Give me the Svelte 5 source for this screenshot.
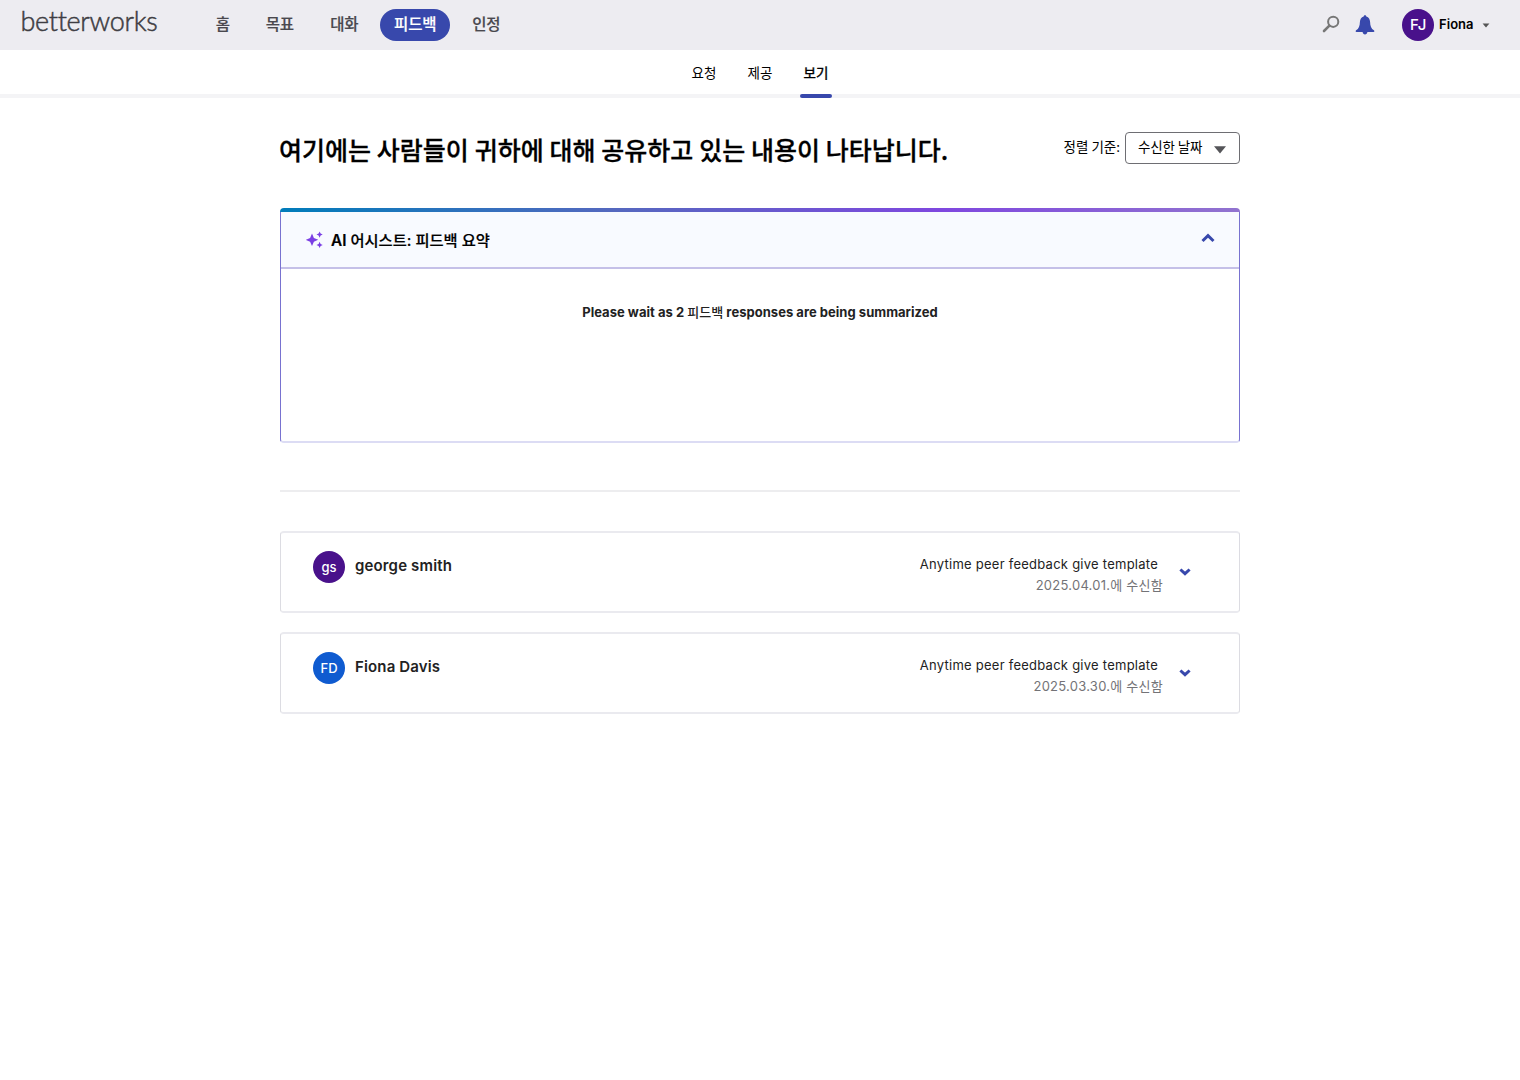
<script>
  const nav = [
    { label: '홈', size: 'one' },
    { label: '목표', size: 'two' },
    { label: '대화', size: 'two' },
    { label: '피드백', size: 'three', active: true },
    { label: '인정', size: 'two' }
  ];
  const tabs = ['요청', '제공', '보기'];
  let tab = $state('보기');
  const feedback = [
    { initials: 'gs', name: 'george smith', date: '2025.04.01.', tone: 'purple' },
    { initials: 'FD', name: 'Fiona Davis', date: '2025.03.30.', tone: 'blue' }
  ];
</script>

<header>
  <div class="logo">betterworks</div>
  <nav>
    {#each nav as item}
      <span class="item {item.size}" class:active={item.active}>{item.label}</span>
    {/each}
  </nav>
  <div class="tools">
    <svg class="search" width="18" height="18" viewBox="0 0 18 18">
      <circle cx="11.2" cy="6.8" r="5.1" fill="none" stroke="#777" stroke-width="2" />
      <path d="M7.4 10.6 2 16" stroke="#777" stroke-width="2.6" stroke-linecap="round" />
    </svg>
    <svg class="bell" width="20" height="20" viewBox="0 0 20 20">
      <path fill="#3848ac" d="M10 .2c.8 0 1.2.5 1.3 1.2 2.5.7 3.700 2.800 3.800 5.600.1 4.300 1.100 6.600 3.800 8.300.3.300.5.600.5.900 0 .5-.4.700-.9.700h-6.100c-.2 1.600-1.100 2.500-2.400 2.500s-2.200-.9-2.400-2.500H1.500c-.5 0-.9-.2-.9-.7 0-.3.2-.6.5-.9C3.800 13.600 4.800 11.300 4.900 7c.1-2.800 1.300-4.900 3.800-5.600C8.800.7 9.200.2 10 .2z" />
    </svg>
    <span class="avatar purple me">FJ</span>
    <span class="user">Fiona</span>
    <svg width="8" height="5" viewBox="0 0 8 5"><path d="M.6.4h6.800L4 4.400z" fill="#555" /></svg>
  </div>
</header>

<div class="tabs">
  {#each tabs as t}
    <button class:on={t === tab} onclick={() => (tab = t)}>{t}</button>
  {/each}
</div>

<main>
  <div class="heading">
    <h1>여기에는 사람들이 귀하에 대해 공유하고 있는 내용이 나타납니다.</h1>
    <div class="sort">
      <span>정렬 기준:</span>
      <div class="select">
        <span>수신한 날짜</span>
        <svg width="12" height="8" viewBox="0 0 12 8"><path d="M0 .3h12L6 7.500z" fill="#555559" /></svg>
      </div>
    </div>
  </div>

  <section class="assist">
    <div class="bar"></div>
    <div class="box">
      <div class="head">
        <svg width="17" height="17" viewBox="0 0 17 17" fill="#7b3fe4">
          <path d="M6 2.600 7.900 6.900 12.200 8.800 7.900 10.700 6 15 4.100 10.700-.2 8.800 4.100 6.900z" />
          <path d="M13.600.5l1 2.100 2.100 1-2.100 1-1 2.100-1-2.100-2.100-1 2.100-1z" />
          <path d="M13.600 10.800l1 2.100 2.100 1-2.100 1-1 2.100-1-2.100-2.100-1 2.100-1z" />
        </svg>
        <h2><b>AI</b> 어시스트: 피드백 요약</h2>
        <svg class="up" width="14" height="10" viewBox="0 0 14 10"><path d="M1.500 8 7 2.700 12.500 8" fill="none" stroke="#3848ac" stroke-width="3" /></svg>
      </div>
      <p>Please wait as 2 <span>피드백</span> responses are being summarized</p>
    </div>
  </section>

  <hr />

  {#each feedback as f}
    <article>
      <span class="avatar {f.tone}">{f.initials}</span>
      <h3>{f.name}</h3>
      <div class="meta">
        <div class="template">Anytime peer feedback give template</div>
        <div class="date">{f.date}에 수신함</div>
      </div>
      <svg width="12" height="8" viewBox="0 0 12 8"><path d="M1.400 1.500 6 5.700l4.600-4.200" fill="none" stroke="#3848ac" stroke-width="3" /></svg>
    </article>
  {/each}
</main>

<style>
  :global(body) {
    background: #fff;
    color: #000;
    font-family: Inter, 'Noto Sans CJK KR', sans-serif;
  }
  header {
    height: 50px;
    background: #edecf1;
    display: flex;
    align-items: center;
    box-sizing: border-box;
    padding: 0 30.5px 0 20.5px;
  }
  .logo {
    width: 182.5px;
    margin-top: -8px;
    font: 300 27px/30px Lato, sans-serif;
    letter-spacing: -0.32px;
    color: #3e3d43;
    -webkit-text-stroke: 0.5px;
  }
  nav {
    display: flex;
    gap: 7.5px;
    margin-left: -1.3px;
  }
  .item {
    height: 32px;
    line-height: 29px;
    border-radius: 16px;
    text-align: center;
    font-family: 'Noto Sans CJK KR', sans-serif;
    font-size: 15.5px;
    font-weight: 500;
    letter-spacing: -0.2px;
    color: #49484e;
    -webkit-text-stroke: 0.2px;
  }
  .one { width: 42px; }
  .two { width: 57px; }
  .three { width: 70px; }
  .active {
    background: #3848ac;
    color: #fff;
  }
  .tools {
    display: flex;
    align-items: center;
    margin-left: auto;
  }
  .bell { margin: 0 27px 0 15px; }
  .search { margin-top: -2px; }
  .avatar {
    width: 32px;
    height: 32px;
    line-height: 32px;
    border-radius: 50%;
    text-align: center;
    color: #fff;
    font-size: 13px;
    font-weight: 500;
    flex: none;
  }
  .avatar.purple { background: #49118b; }
  .avatar.blue { background: #0f5bd0; }
  .me { font-size: 15px; }
  .user {
    margin: -2px 8px 0 5px;
    font-size: 13px;
    font-weight: 600;
  }
  .tabs {
    height: 48px;
    box-sizing: border-box;
    border-bottom: 4px solid #f4f4f6;
    display: flex;
    justify-content: center;
    gap: 24px;
  }
  button {
    width: 32px;
    height: 48px;
    padding: 0;
    border: 0;
    background: none;
    color: #000;
    font: 400 13.5px/44px 'Noto Sans CJK KR', sans-serif;
    display: flex;
    flex-direction: column;
    align-items: center;
    justify-content: flex-start;
    white-space: nowrap;
  }
  .on { -webkit-text-stroke: 0.4px; }
  .on::after {
    content: '';
    width: 32px;
    height: 4px;
    border-radius: 2px;
    background: #3848ac;
    flex: none;
  }
  main {
    width: 960px;
    margin: 0 auto;
  }
  .heading {
    height: 110px;
    box-sizing: border-box;
    padding-top: 34px;
    display: flex;
    justify-content: space-between;
    align-items: flex-start;
  }
  h1 {
    margin: 0 0 0 -1px;
    font: 500 25px/34px 'Noto Sans CJK KR', sans-serif;
    word-spacing: 0.2px;
    -webkit-text-stroke: 0.3px;
    white-space: nowrap;
  }
  .sort {
    display: flex;
    align-items: flex-start;
    gap: 5px;
    font: 400 13.5px/29px 'Noto Sans CJK KR', sans-serif;
  }
  .select {
    width: 115px;
    height: 32px;
    box-sizing: border-box;
    border: 1px solid #6e6e73;
    border-radius: 4px;
    padding: 0 13px 0 12px;
    line-height: 27px;
    letter-spacing: -0.15px;
    display: flex;
    justify-content: space-between;
  }
  .select svg { margin-top: 13px; }
  .bar {
    height: 4px;
    border-radius: 4px 4px 0 0;
    background: linear-gradient(90deg, #007cba, #5568bf 35%, #7f47df 69%, #9173cf);
  }
  .box {
    height: 231px;
    box-sizing: border-box;
    border: 1px solid #7872d0;
    border-top: 0;
    border-bottom: 2px solid #dcdcf4;
    border-radius: 0 0 4px 4px;
  }
  .head {
    height: 57px;
    box-sizing: border-box;
    background: #f8faff;
    border-bottom: 2px solid #c5c0e8;
    padding: 0 24px 0 25px;
    display: flex;
    align-items: center;
  }
  h2 {
    margin: 2px 0 0 8px;
    font: 500 15.3px/24px Inter, 'Noto Sans CJK KR', sans-serif;
    -webkit-text-stroke: 0.2px;
  }
  h2 b { font-weight: 600; }
  .up { margin: -4px 0 0 auto; }
  p {
    margin: 33px 0 0;
    text-align: center;
    color: #222;
    font-size: 13px;
    font-weight: 650;
    line-height: 20px;
    letter-spacing: 0.03px;
  }
  p span { font-weight: 500; }
  hr {
    height: 2px;
    margin: 47px 0 39px;
    border: 0;
    background: #ededef;
  }
  article {
    height: 82px;
    box-sizing: border-box;
    margin-bottom: 19px;
    border: 1px solid #dfdfe5;
    border-width: 2px 1px;
    border-color: #eaeaef #dcdce2;
    border-radius: 4px;
    padding: 18px 48px 0 32px;
    display: flex;
    align-items: flex-start;
  }
  h3 {
    margin: 5px auto 0 10px;
    font-size: 15px;
    line-height: 20px;
    font-weight: 600;
    letter-spacing: 0.15px;
    color: #222;
  }
  .meta {
    text-align: right;
    font-size: 13px;
    line-height: 20px;
    padding-top: 3px;
    letter-spacing: 0.25px;
  }
  .template {
    padding-right: 5px;
    color: #222;
  }
  .date {
    margin-top: 1px;
    color: #737377;
  }
  article svg { margin: 17px 0 0 16px; }
</style>
